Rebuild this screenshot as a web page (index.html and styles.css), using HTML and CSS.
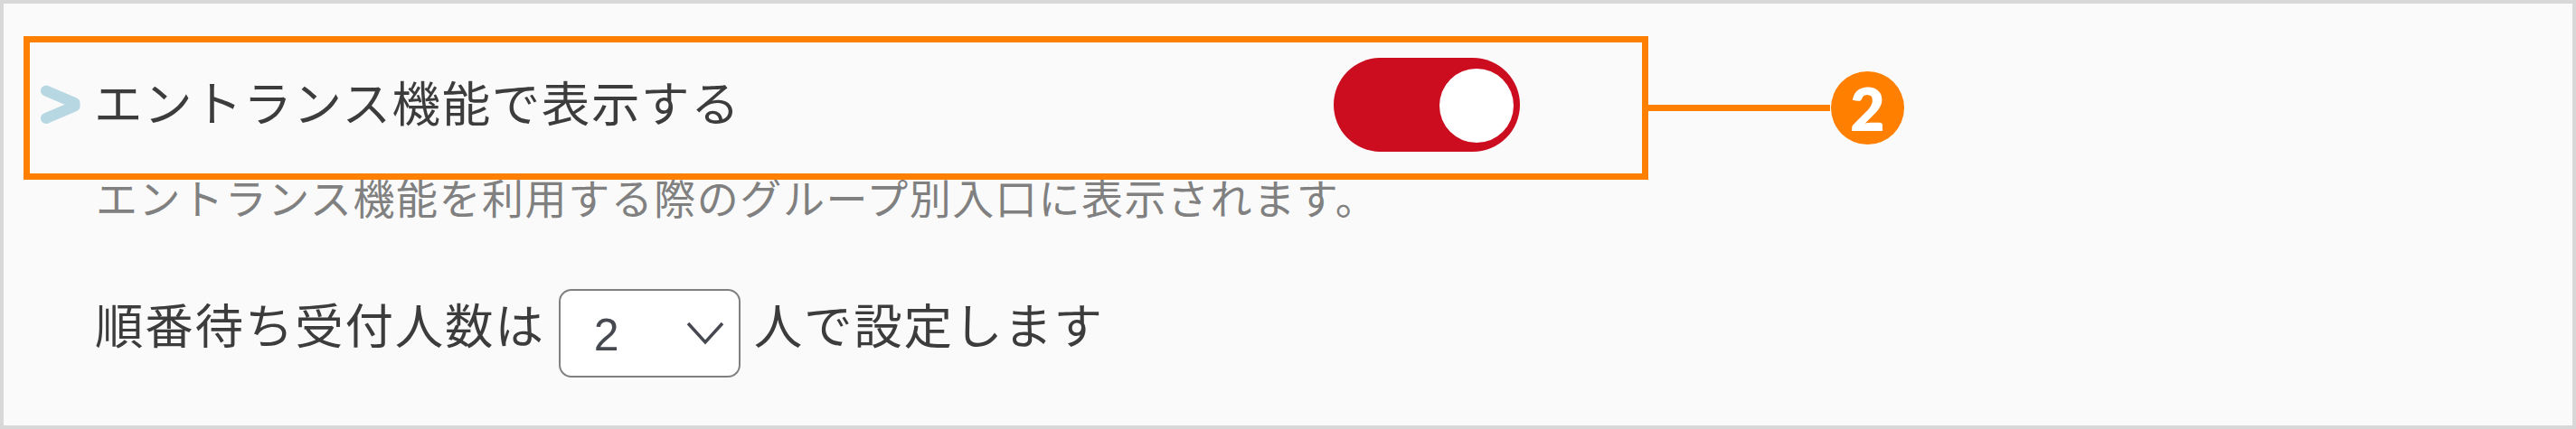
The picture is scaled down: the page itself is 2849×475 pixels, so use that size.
FILE: index.html
```html
<!DOCTYPE html>
<html lang="ja">
<head>
  <meta charset="UTF-8">
  <title>エントランス機能</title>
  <link rel="stylesheet" href="styles.css">
</head>
<body>
  <div class="panel">
    <div class="setting-row">
      <svg class="arrow" width="44" height="44" viewBox="0 0 44 44">
        <path d="M6 6.5 L37.5 20 V23.5 L6 37" />
      </svg>
      <label class="setting-label" for="entrance">エントランス機能で表示する</label>
      <button class="toggle" id="entrance" role="switch" aria-checked="true"><span class="knob"></span></button>
    </div>

    <p class="note">エントランス機能を利用する際のグループ別入口に表示されます。</p>

    <div class="count-row">
      <span>順番待ち受付人数は</span>
      <div class="select">
        <span>2</span>
        <svg width="44" height="28" viewBox="0 0 44 28">
          <path d="M3 3 L22 24 L41 3" />
        </svg>
      </div>
      <span>人で設定します</span>
    </div>

    <!-- callout drawn over the first row -->
    <div class="callout">
      <div class="callout-frame"></div>
      <div class="callout-line"></div>
      <div class="callout-badge">2</div>
    </div>
  </div>
</body>
</html>
```

FILE: styles.css
```css
body {
  margin: 0;
  font-family: "Liberation Sans", "Noto Sans CJK JP", sans-serif;
  color: #3c3c3c;
}

.panel {
  position: relative;
  box-sizing: border-box;
  height: 475px;
  padding: 60px 0 0 41px;
  border: 4px solid #d8d8d8;
  background: #fafafa;
}

.setting-row {
  display: flex;
  align-items: center;
  width: 1636px;
  height: 104px;
}

.arrow {
  margin-right: 15px;
}

.arrow path {
  fill: none;
  stroke: #b7d7e2;
  stroke-width: 12;
  stroke-linecap: round;
  stroke-linejoin: round;
}

.setting-label {
  margin-top: -9px;
  font-family: "Noto Sans CJK JP", sans-serif;
  font-size: 53.5px;
  letter-spacing: 1.6px;
  line-height: 80px;
}

.toggle {
  display: flex;
  align-items: center;
  justify-content: flex-end;
  box-sizing: border-box;
  width: 206px;
  height: 104px;
  margin-left: auto;
  padding: 0 7px 0 0;
  border: none;
  border-radius: 52px;
  background: #cb0d1f;
}

.knob {
  width: 82px;
  height: 82px;
  margin-top: 2px;
  border-radius: 50%;
  background: #fff;
}

.note {
  margin: 14px 0 0 61px;
  font-family: "Noto Sans CJK JP", sans-serif;
  font-size: 46px;
  letter-spacing: 1.55px;
  line-height: 70px;
  color: #808080;
}

.count-row {
  display: flex;
  align-items: center;
  height: 98px;
  margin: 68px 0 0 60px;
  font-family: "Noto Sans CJK JP", sans-serif;
  font-size: 53.5px;
  letter-spacing: 1.8px;
  line-height: 80px;
}

.count-row > span {
  margin-top: -22px;
}

.select {
  display: flex;
  align-items: center;
  justify-content: space-between;
  box-sizing: border-box;
  width: 201px;
  height: 98px;
  margin: 0 15px;
  padding: 4px 15px 0 37px;
  border: 2px solid #808080;
  border-radius: 14px;
  background: #fff;
  font-family: "Liberation Sans", Arial, sans-serif;
  font-size: 50px;
  letter-spacing: 0;
  color: #464a50;
}

.select svg {
  margin-top: -4px;
}

.select path {
  fill: none;
  stroke: #464a50;
  stroke-width: 3.5;
}

.callout {
  position: absolute;
  top: 36px;
  left: 22px;
  display: flex;
  align-items: center;
}

.callout-frame {
  box-sizing: border-box;
  width: 1797px;
  height: 159px;
  border: 7px solid #ff7f00;
}

.callout-line {
  width: 201px;
  height: 7px;
  background: #ff7f00;
}

.callout-badge {
  width: 81px;
  height: 81px;
  margin-left: 1px;
  border-radius: 50%;
  background: #ff7f00;
  color: #fff;
  font-family: Lato, sans-serif;
  font-size: 66px;
  font-weight: 800;
  line-height: 81px;
  text-align: center;
}
```
